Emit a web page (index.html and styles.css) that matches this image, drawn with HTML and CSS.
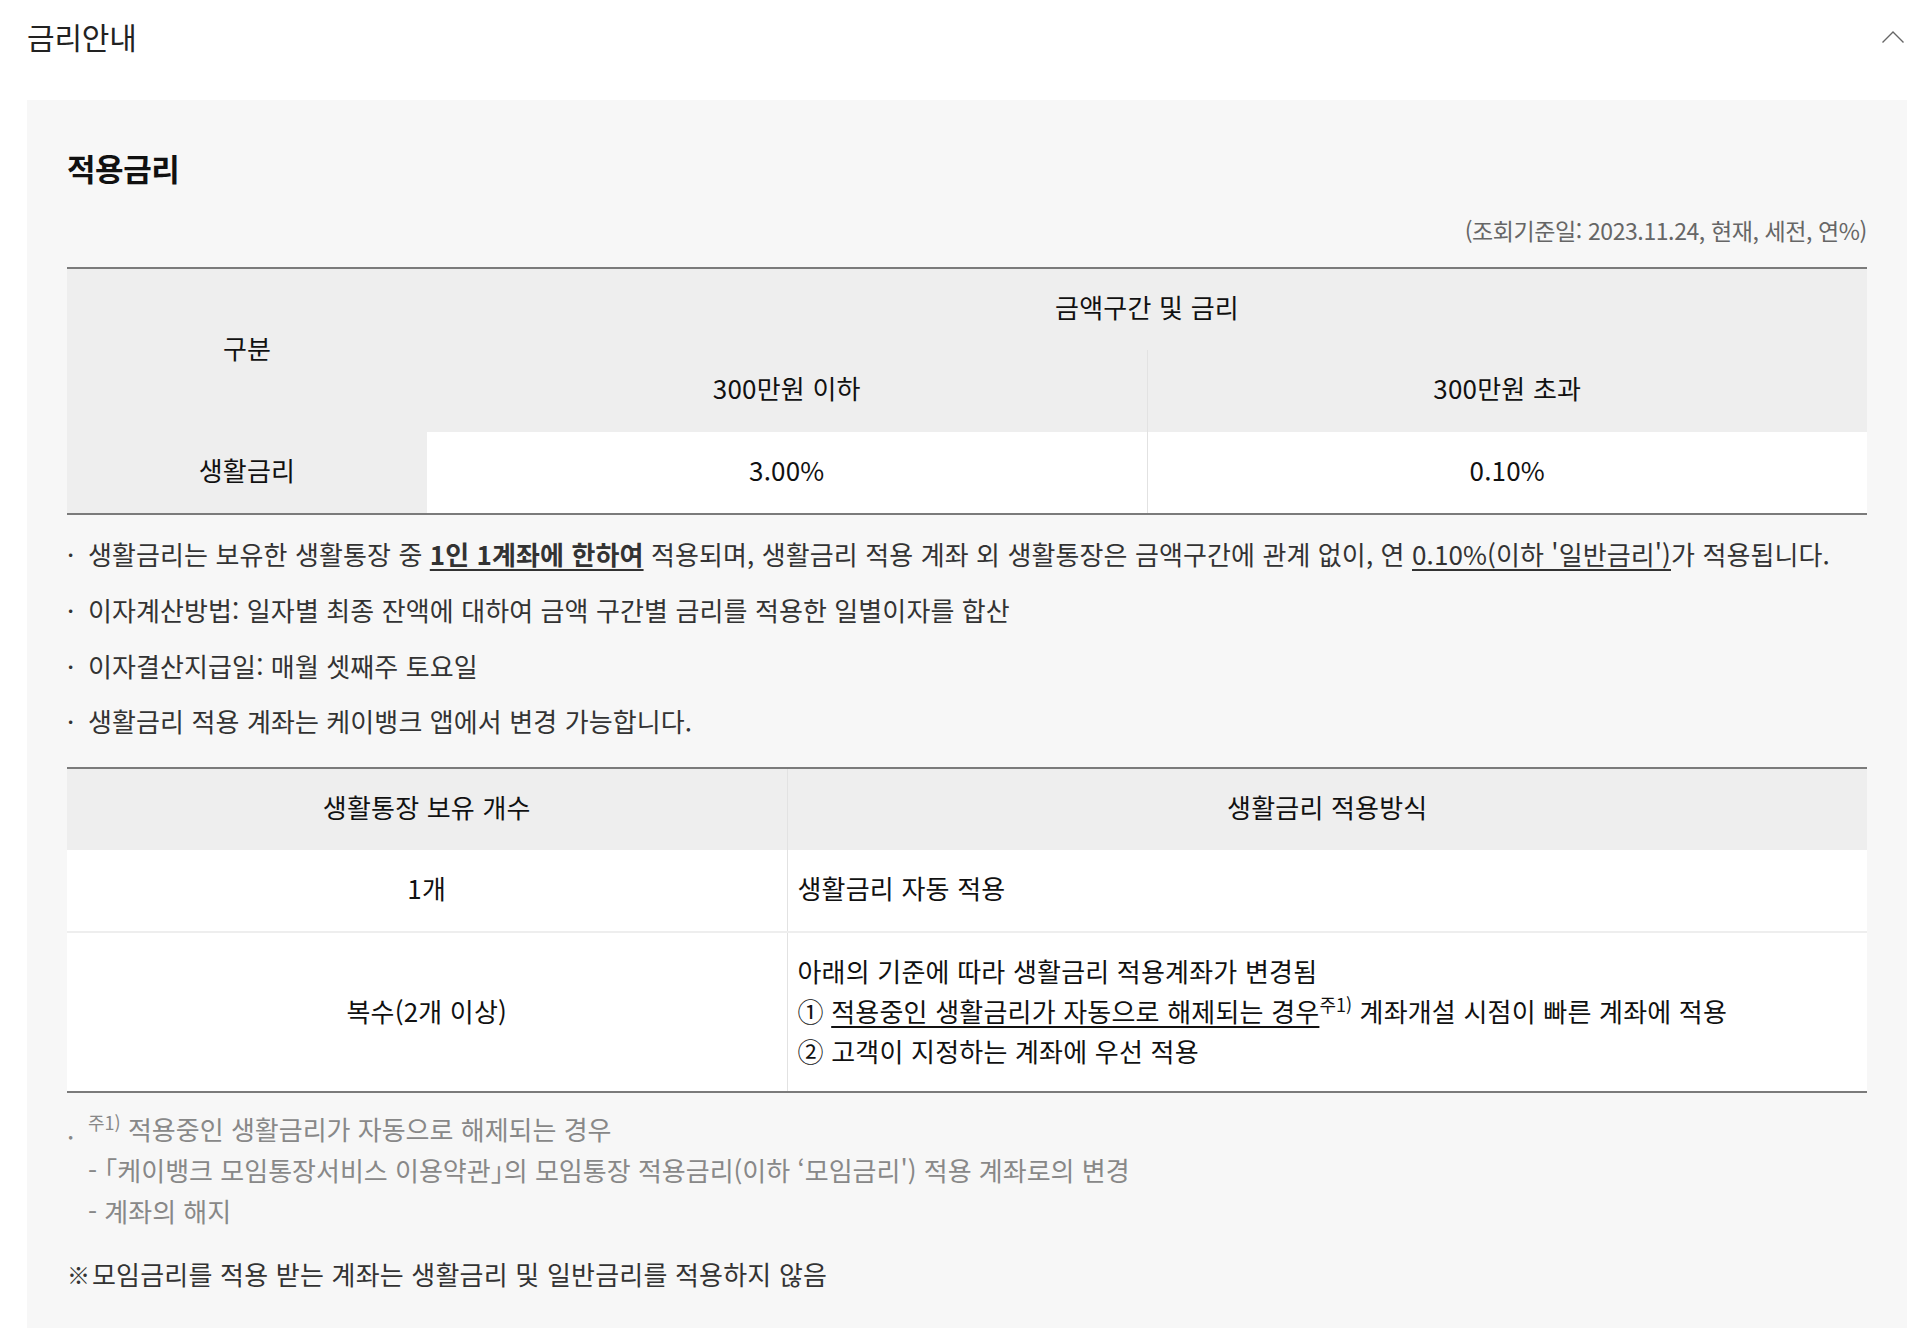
FILE: index.html
```html
<!DOCTYPE html>
<html lang="ko">
<head>
<meta charset="utf-8">
<title>금리안내</title>
<link rel="stylesheet" href="styles.css">
</head>
<body>
<div class="page">
  <div class="acc-head">
    <h2 class="acc-title">금리안내</h2>
    <svg class="chevron" width="24" height="14" viewBox="0 0 24 14" aria-hidden="true">
      <path d="M1.5 12.5 L12 2 L22.5 12.5" fill="none" stroke="#666" stroke-width="1.4"/>
    </svg>
  </div>
  <section class="panel">
    <h3 class="sec-title">적용금리</h3>
    <p class="date-note">(조회기준일: 2023.11.24, 현재, 세전, 연%)</p>
    <table class="rate-table">
      <colgroup><col class="c20"><col class="c40"><col class="c40"></colgroup>
      <tr>
        <th rowspan="2" class="th">구분</th>
        <th colspan="2" class="th">금액구간 및 금리</th>
      </tr>
      <tr>
        <th class="th">300만원 이하</th>
        <th class="th vline">300만원 초과</th>
      </tr>
      <tr>
        <th class="th">생활금리</th>
        <td class="td">3.00%</td>
        <td class="td vline">0.10%</td>
      </tr>
    </table>
    <ul class="bullets">
      <li>생활금리는 보유한 생활통장 중 <strong class="ul">1인 1계좌에 한하여</strong> 적용되며, 생활금리 적용 계좌 외 생활통장은 금액구간에 관계 없이, 연 <span class="ul">0.10%(이하 '일반금리')</span>가 적용됩니다.</li>
      <li>이자계산방법: 일자별 최종 잔액에 대하여 금액 구간별 금리를 적용한 일별이자를 합산</li>
      <li>이자결산지급일: 매월 셋째주 토요일</li>
      <li>생활금리 적용 계좌는 케이뱅크 앱에서 변경 가능합니다.</li>
    </ul>
    <table class="method-table">
      <colgroup><col class="c40"><col class="c60"></colgroup>
      <tr>
        <th class="th">생활통장 보유 개수</th>
        <th class="th vline">생활금리 적용방식</th>
      </tr>
      <tr class="row-sep">
        <td class="td">1개</td>
        <td class="td vline left">생활금리 자동 적용</td>
      </tr>
      <tr>
        <td class="td tall">복수(2개 이상)</td>
        <td class="td vline left tall">아래의 기준에 따라 생활금리 적용계좌가 변경됨<br>① <span class="ul">적용중인 생활금리가 자동으로 해제되는 경우</span><sup>주1)</sup> 계좌개설 시점이 빠른 계좌에 적용<br>② 고객이 지정하는 계좌에 우선 적용</td>
      </tr>
    </table>
    <div class="footnote">
      <p class="fn-first"><span class="fn-dot">.</span><sup>주1)</sup> 적용중인 생활금리가 자동으로 해제되는 경우</p>
      <p class="fn-sub">- <span class="half">「</span>케이뱅크 모임통장서비스 이용약관<span class="half">」</span>의 모임통장 적용금리(이하 ‘모임금리') 적용 계좌로의 변경</p>
      <p class="fn-sub">- 계좌의 해지</p>
    </div>
    <p class="notice"><span class="ref-mark">※</span>모임금리를 적용 받는 계좌는 생활금리 및 일반금리를 적용하지 않음</p>
  </section>
</div>
</body>
</html>
```

FILE: styles.css
```css
* { box-sizing: border-box; }
html, body { margin: 0; padding: 0; background: #fff; }
body {
  font-family: "Noto Sans CJK KR", "Noto Sans", sans-serif;
  color: #222;
}
.page { padding: 0 19px 0 27px; }
.acc-head {
  height: 100px;
  display: flex;
  align-items: flex-start;
  justify-content: space-between;
  padding-top: 16px;
}
.acc-title {
  margin: 0;
  font-size: 30px;
  font-weight: 400;
  line-height: 40px;
  letter-spacing: -0.2px;
  color: #222;
}
.chevron { margin-top: 14px; margin-right: 2px; }
.panel {
  background: #f7f7f7;
  padding: 48px 40px 40px;
}
.sec-title {
  margin: 0;
  font-size: 31px;
  font-weight: 700;
  line-height: 40px;
  letter-spacing: -0.4px;
  color: #111;
}
.date-note {
  margin: 27px 0 22px;
  text-align: right;
  font-size: 23px;
  line-height: 30px;
  color: #666;
  letter-spacing: -0.4px;
}
table {
  width: 100%;
  border-collapse: collapse;
  table-layout: fixed;
  border-top: 2px solid #7b7b7b;
  border-bottom: 2px solid #7b7b7b;
  font-size: 26px;
  letter-spacing: 0.2px;
}
.c20 { width: 20%; }
.c40 { width: 40%; }
.c60 { width: 60%; }
.th {
  background: #eeeeee;
  font-weight: 400;
  color: #111;
  height: 82px;
  text-align: center;
  vertical-align: middle;
  padding: 0 0 7px;
}
.td {
  background: #fff;
  color: #111;
  height: 82px;
  text-align: center;
  vertical-align: middle;
  padding: 0 0 7px;
}
.vline { border-left: 1px solid #e2e2e2; }
.left { text-align: left; padding-left: 10px; }
.row-sep td { border-bottom: 2px solid #eeeeee; }
.tall { height: 160px; line-height: 40px; padding-bottom: 2px; }
sup {
  font-size: 18px;
  line-height: 0;
  vertical-align: 10px;
  letter-spacing: 0;
}
.ul { text-decoration: underline; text-underline-offset: 4px; }
strong.ul { font-weight: 700; color: #333; text-decoration-thickness: 2px; }
.bullets {
  list-style: none;
  margin: 0 0 25px;
  padding: 4px 0 0;
  font-size: 26px;
  line-height: 40.8px;
  color: #333;
  letter-spacing: 0.1px;
}
.bullets li {
  position: relative;
  padding-left: 21px;
  margin-top: 15px;
}
.bullets li::before {
  content: "·";
  position: absolute;
  left: 0;
  top: 0;
}
.footnote {
  margin-top: 15px;
  font-size: 26px;
  line-height: 41px;
  color: #888;
  letter-spacing: 0;
}
.footnote p { margin: 0; }
.fn-first { position: relative; padding-left: 21px; }
.fn-dot { position: absolute; left: 0; top: 0; }
.fn-sub { padding-left: 21px; }
.footnote sup { color: #888; }
.half { font-feature-settings: "halt" 1; }
.notice {
  margin: 23px 0 0;
  font-size: 26px;
  line-height: 40px;
  color: #333;
  letter-spacing: 0.2px;
}
.ref-mark {
  font-size: 23px;
  font-weight: 700;
  letter-spacing: 0;
  margin-right: 2px;
  vertical-align: 1px;
}
```
